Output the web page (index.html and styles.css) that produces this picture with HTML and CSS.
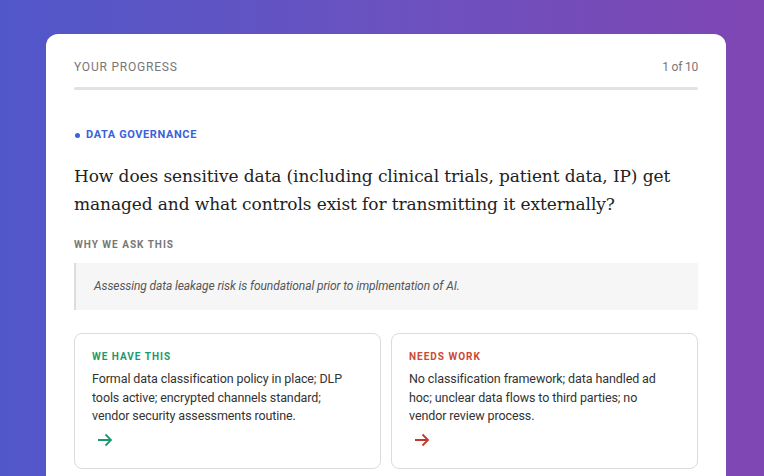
FILE: index.html
```html
<!DOCTYPE html>
<html>
<head>
<meta charset="utf-8">
<link rel="stylesheet" href="styles.css">
</head>
<body>
<div class="page">
  <div class="card">
    <div class="progress-head">
      <span class="progress-label">YOUR PROGRESS</span>
      <span class="progress-count">1 of 10</span>
    </div>
    <div class="progress-bar"><div class="progress-fill" style="width:0%"></div></div>
    <div class="category"><span class="dot"></span>DATA GOVERNANCE</div>
    <h1 class="question">How does sensitive data (including clinical trials, patient data, IP) get managed and what controls exist for transmitting it externally?</h1>
    <div class="why">WHY WE ASK THIS</div>
    <div class="quote">Assessing data leakage risk is foundational prior to implmentation of AI.</div>
    <div class="options">
      <div class="option">
        <div class="opt-label good">WE HAVE THIS</div>
        <div class="opt-text">Formal data classification policy in place; DLP tools active; encrypted channels standard; vendor security assessments routine.</div>
        <svg class="arrow good" width="16" height="14" viewBox="0 0 16 14"><path d="M1 7H14M8.5 1.5L14 7L8.5 12.5" fill="none" stroke="currentColor" stroke-width="1.8"/></svg>
      </div>
      <div class="option">
        <div class="opt-label bad">NEEDS WORK</div>
        <div class="opt-text">No classification framework; data handled ad hoc; unclear data flows to third parties; no vendor review process.</div>
        <svg class="arrow bad" width="16" height="14" viewBox="0 0 16 14"><path d="M1 7H14M8.5 1.5L14 7L8.5 12.5" fill="none" stroke="currentColor" stroke-width="1.8"/></svg>
      </div>
    </div>
  </div>
</div>
</body>
</html>
```
FILE: styles.css
```css
html, body {
  margin: 0;
  padding: 0;
  height: 100%;
  overflow: hidden;
}
body {
  background: linear-gradient(90deg, #5157c9 0%, #6a52c0 50%, #7f46b3 100%);
  font-family: "Roboto", sans-serif;
}
.page {
  padding: 34px 38px 0 46px;
}
.card {
  background: #fff;
  border-radius: 12px;
  padding: 26px 28px 40px 28px;
  height: 500px;
  box-sizing: border-box;
}
.progress-head {
  display: flex;
  justify-content: space-between;
  align-items: center;
  color: #777;
  font-size: 12px;
  line-height: 14px;
}
.progress-label {
  letter-spacing: 0.8px;
}
.progress-count {
  letter-spacing: -0.2px;
}
.progress-bar {
  margin-top: 13px;
  height: 3px;
  background: #e2e2e2;
  border-radius: 2px;
}
.progress-fill {
  height: 100%;
  background: #5157c9;
}
.category {
  margin-top: 38px;
  display: flex;
  align-items: center;
  color: #3a62d9;
  font-weight: bold;
  font-size: 11px;
  line-height: 14px;
  letter-spacing: 0.6px;
}
.dot {
  width: 5px;
  height: 5px;
  border-radius: 50%;
  background: #3a62d9;
  margin-right: 6px;
  margin-left: 1px;
}
.question {
  margin: 20px 0 0 0;
  font-family: "DejaVu Serif", serif;
  font-weight: normal;
  font-size: 17px;
  line-height: 28px;
  letter-spacing: -0.1px;
  color: #222;
}
.why {
  margin-top: 21px;
  font-size: 10px;
  line-height: 12px;
  font-weight: bold;
  letter-spacing: 1px;
  color: #777;
}
.quote {
  margin-top: 12px;
  background: #f6f6f6;
  border-left: 2px solid #ddd;
  padding: 16px 18px 17px 18px;
  font-style: italic;
  font-size: 12px;
  line-height: 14px;
  letter-spacing: -0.1px;
  color: #555;
}
.options {
  margin-top: 23px;
  display: grid;
  grid-template-columns: 1fr 1fr;
  gap: 10px;
}
.option {
  border: 1px solid #dcdcdc;
  border-radius: 8px;
  padding: 17px 22px 20px 17px;
  height: 136px;
  box-sizing: border-box;
}
.opt-label {
  font-size: 10px;
  line-height: 12px;
  font-weight: bold;
  letter-spacing: 1px;
}
.opt-label.good { color: #1a9a6c; }
.opt-label.bad { color: #cc4a33; }
.opt-text {
  margin-top: 7px;
  font-size: 12.5px;
  line-height: 18.5px;
  letter-spacing: -0.1px;
  color: #333;
}
.arrow {
  display: block;
  margin-top: 7px;
  margin-left: 5px;
}
.arrow.good { color: #1a9a6c; }
.arrow.bad { color: #c0392b; }
```
